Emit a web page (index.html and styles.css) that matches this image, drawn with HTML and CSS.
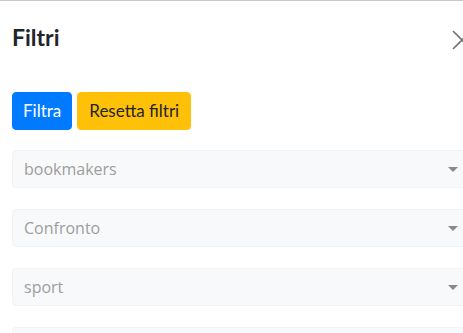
FILE: index.html
```html
<!DOCTYPE html>
<html lang="it">
<head>
<meta charset="utf-8">
<link rel="stylesheet" href="styles.css">
</head>
<body>
<div class="panel">
  <div class="header">
    <h5 class="title">Filtri</h5>
    <span class="close">
      <svg width="20" height="20" viewBox="0 0 20 20"><path d="M1 1 L19 19 M19 1 L1 19" stroke="#737373" stroke-width="1.6" fill="none"/></svg>
    </span>
  </div>
  <div class="body">
    <div class="actions">
      <button class="btn btn-blue">Filtra</button>
      <button class="btn btn-yellow">Resetta filtri</button>
    </div>
    <div class="fields">
      <div class="select"><span>bookmakers</span><i class="caret"></i></div>
      <div class="select"><span>Confronto</span><i class="caret"></i></div>
      <div class="select"><span>sport</span><i class="caret"></i></div>
      <div class="select"><span>&nbsp;</span><i class="caret"></i></div>
    </div>
  </div>
</div>
</body>
</html>
```
FILE: styles.css
```css
html, body {
  margin: 0;
  padding: 0;
  background: #fff;
  overflow: hidden;
}
body {
  font-family: "Open Sans", "Noto Sans", sans-serif;
  width: 463px;
  height: 333px;
}
.panel {
  width: 475px;
  border-top: 1px solid #c9c9c9;
}
.header {
  display: flex;
  align-items: center;
  justify-content: space-between;
  padding: 20px 0 0 12px;
  height: 33px;
}
.title {
  margin: 0;
  font-family: Lato, "Open Sans", sans-serif;
  font-size: 23px;
  font-weight: 700;
  line-height: 33px;
  color: #212529;
}
.close {
  display: flex;
  margin-right: 3px;
  margin-top: 4px;
}
.body {
  padding: 38px 0 0 12px;
}
.actions {
  display: flex;
  gap: 5px;
}
.btn {
  font-family: Lato, "Open Sans", sans-serif;
  font-size: 17px;
  line-height: 24px;
  padding: 6px 10px;
  border: 1px solid transparent;
  border-radius: 4px;
  height: 38px;
}
.btn-blue {
  background: #007bff;
  color: #fff;
  border-color: #007bff;
}
.btn-yellow {
  background: #ffc107;
  color: #212529;
  border-color: #ffc107;
  padding: 6px 11px;
}
.fields {
  display: flex;
  flex-direction: column;
  gap: 21px;
  margin-top: 20px;
}
.select {
  display: flex;
  align-items: center;
  justify-content: space-between;
  height: 38px;
  box-sizing: border-box;
  background: #f8f9fa;
  border: 1px solid #f1f3f5;
  border-radius: 4px;
  padding: 0 16px 0 11px;
  font-size: 16px;
  color: #9e9e9e;
}
.caret {
  width: 0;
  height: 0;
  border-left: 5px solid transparent;
  border-right: 5px solid transparent;
  border-top: 5px solid #8a8a8a;
}
```
